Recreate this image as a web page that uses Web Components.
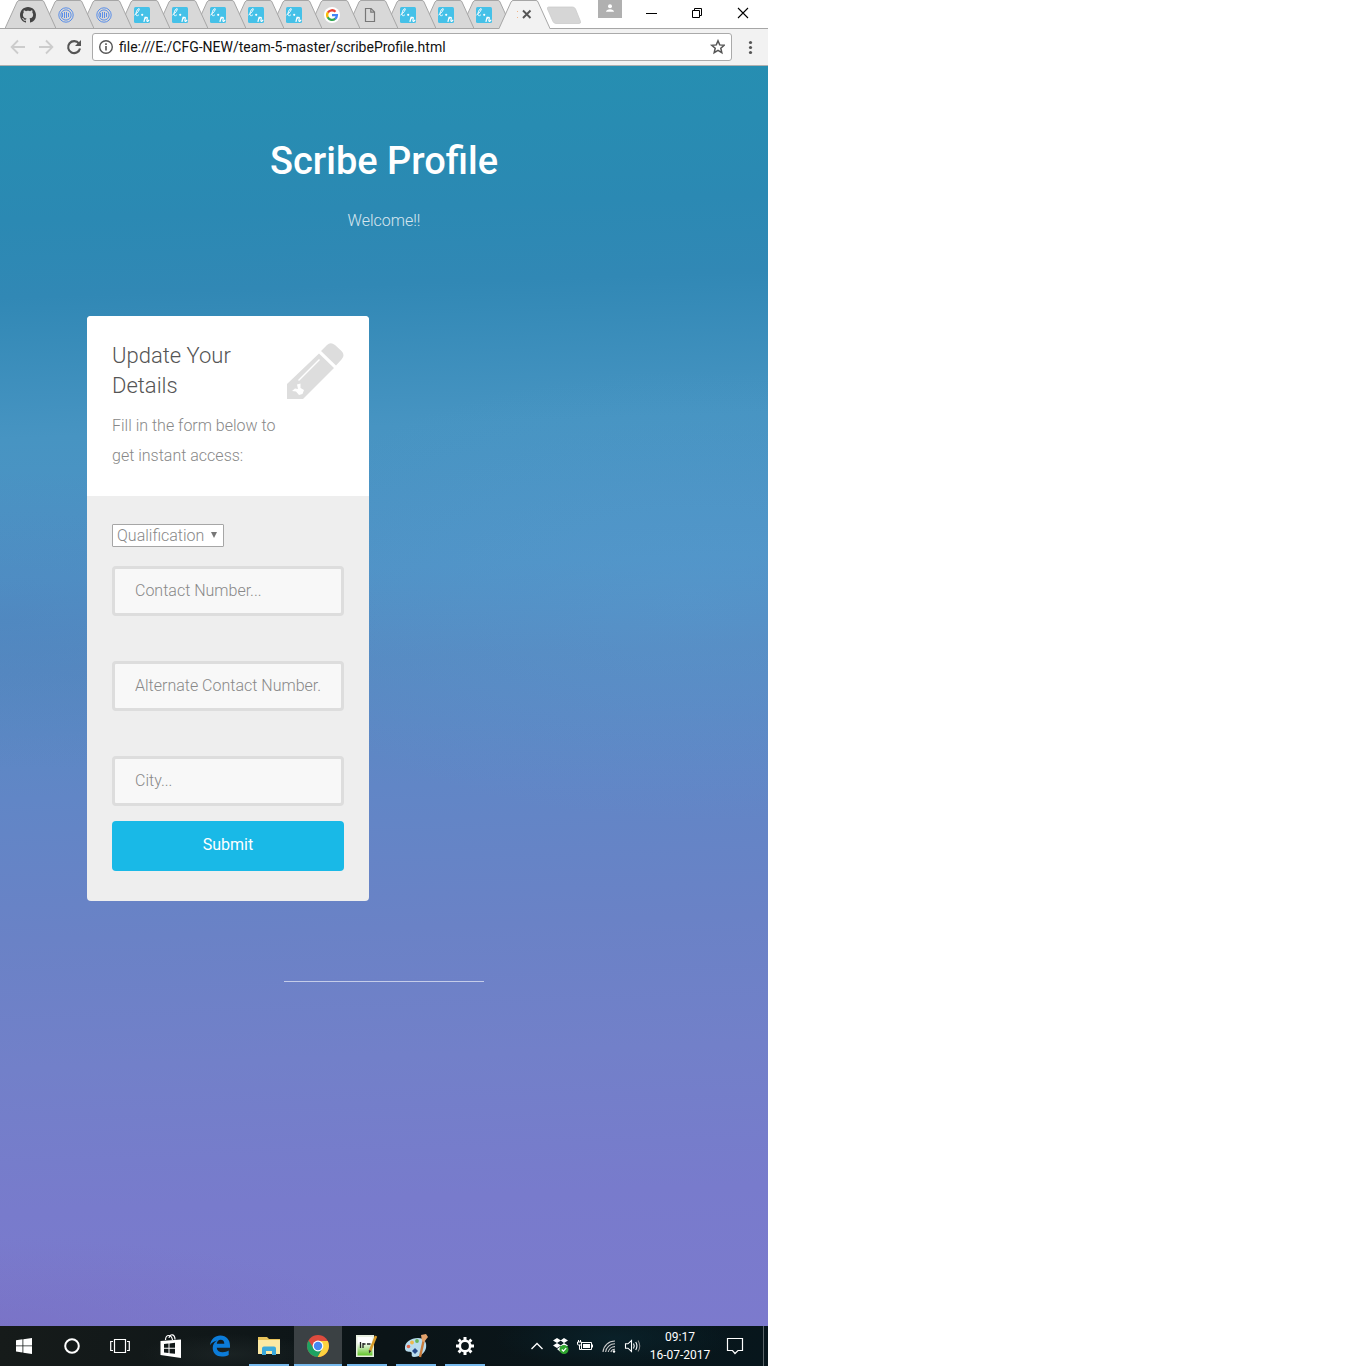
<!DOCTYPE html>
<html lang="en">
<head>
<meta charset="utf-8">
<meta name="viewport" content="width=device-width, initial-scale=1">
<title>Scribe Profile</title>
<style>
  body { margin: 0; background: #fff; font-family: Roboto, "Liberation Sans", sans-serif; }
</style>
</head>
<body>
<desktop-screen>
  <browser-tabs></browser-tabs>
  <browser-toolbar url="file:///E:/CFG-NEW/team-5-master/scribeProfile.html"></browser-toolbar>
  <scribe-page>
    <page-intro>
      <span slot="title">Scribe Profile</span>
      <span slot="text">Welcome!!</span>
    </page-intro>
    <details-card>
      <span slot="title">Update Your Details</span>
      <span slot="text">Fill in the form below to get instant access:</span>
      <profile-form></profile-form>
    </details-card>
  </scribe-page>
  <task-bar></task-bar>
</desktop-screen>

<script>
const ICONS = {
  github: '<svg width="16" height="16" viewBox="0 0 16 16"><path fill="#444" d="M8 0C3.58 0 0 3.58 0 8c0 3.54 2.29 6.53 5.47 7.59.4.07.55-.17.55-.38 0-.19-.01-.82-.01-1.49-2.01.37-2.53-.49-2.69-.94-.09-.23-.48-.94-.82-1.13-.28-.15-.68-.52-.01-.53.63-.01 1.08.58 1.23.82.72 1.21 1.87.87 2.33.66.07-.52.28-.87.51-1.07-1.78-.2-3.64-.89-3.64-3.95 0-.87.31-1.59.82-2.15-.08-.2-.36-1.02.08-2.12 0 0 .67-.21 2.2.82.64-.18 1.32-.27 2-.27s1.36.09 2 .27c1.53-1.04 2.2-.82 2.2-.82.44 1.1.16 1.92.08 2.12.51.56.82 1.27.82 2.15 0 3.07-1.87 3.75-3.65 3.95.29.25.54.73.54 1.48 0 1.07-.01 1.93-.01 2.2 0 .21.15.46.55.38A8 8 0 0 0 16 8c0-4.42-3.58-8-8-8z"/></svg>',
  rings: '<svg width="16" height="16" viewBox="0 0 16 16" fill="none" stroke="#5b8fe8"><circle cx="8" cy="8" r="7.2" stroke-width="1"/><circle cx="8" cy="8" r="5.100" stroke-width="1"/><path stroke-width="1" d="M8.500 5v6M6.500 5v6M10.500 6v4M4.500 6v4"/></svg>',
  script: '<svg width="16" height="16" viewBox="0 0 16 16"><rect width="16" height="16" rx="1.5" fill="#45c1e8"/><g fill="none" stroke="#fff" stroke-linecap="round" stroke-linejoin="round"><path stroke-width="1" d="M.8 7.800C3.500 6 5.600 3.200 5.200 1.700 4.500.9 2.200 3.700 2 6.600c-.1 2.600 1.300 2.700 2.700 1.300"/><path stroke-width="1.200" d="M10 14.500l1.100-4.300M10.500 12.500c1-1.800 2.500-2.800 2.800-1.700.1 1-.8 2.700-.3 3.300.5.5 1.300-.1 1.900-.9"/></g><circle cx="8.200" cy="7.800" r="1.100" fill="#fff"/></svg>',
  google: '<svg width="16" height="16" viewBox="0 0 16 16"><circle cx="8" cy="8" r="8" fill="#fff"/><g fill="none" stroke-width="2.300"><path stroke="#ea4335" d="M3.800 5.700A4.900 4.900 0 0 1 11.500 4.700"/><path stroke="#fbbc05" d="M3.900 10.600a4.900 4.900 0 0 1 0-5.200"/><path stroke="#34a853" d="M3.700 10.300a4.900 4.900 0 0 0 7.600 1.400"/><path stroke="#4285f4" d="M8 8.200h4.900a4.900 4.900 0 0 1-1.700 3.600"/></g></svg>',
  page: '<svg width="16" height="16" viewBox="0 0 16 16" fill="none" stroke="#777" stroke-width="1.200"><path d="M3.500 1.500h5.600l3.400 3.400v9.600h-9zM8.800 1.500v3.700h3.700"/></svg>',
  tabClose: '<svg width="16" height="16" viewBox="0 0 16 16"><path fill="#f0b489" d="M0 4h1v1H0zM0 10h1v1H0z"/><path stroke="#555" stroke-width="1.900" d="M6 3.500l7.500 7.500M13.500 3.500L6 11"/></svg>',
  person: '<svg width="24" height="18" viewBox="0 0 24 18"><g fill="#fff"><circle cx="12" cy="6.200" r="2"/><path d="M8 11.800c0-3.500 8-3.500 8 0z"/></g></svg>',
  minimise: '<svg width="12" height="12" viewBox="0 0 12 12"><path stroke="#000" d="M1 6.500h11"/></svg>',
  restore: '<svg width="12" height="12" viewBox="0 0 12 12" fill="none" stroke="#000"><path d="M1.500 3.500h7v7h-7zM3.500 3.500v-2h7v7h-2"/></svg>',
  close: '<svg width="12" height="12" viewBox="0 0 12 12"><path stroke="#000" stroke-width="1.100" d="M1 1l10 10M11 1L1 11"/></svg>',
  back: '<svg width="16" height="16" viewBox="0 0 16 16"><path fill="none" stroke="#ccc" stroke-width="1.800" d="M15 8H2.500M8 1.500L1.600 8 8 14.500"/></svg>',
  forward: '<svg width="16" height="16" viewBox="0 0 16 16"><path fill="none" stroke="#ccc" stroke-width="1.800" d="M1 8h12.500M8 1.500L14.400 8 8 14.500"/></svg>',
  reload: '<svg width="16" height="16" viewBox="0 0 16 16"><path fill="none" stroke="#555" stroke-width="2.100" d="M13 4.600A6 6 0 1 0 14 9.500"/><path fill="#555" d="M15 1v6H9z"/></svg>',
  info: '<svg width="16" height="16" viewBox="0 0 16 16"><circle cx="8" cy="8" r="6.300" fill="none" stroke="#555" stroke-width="1.400"/><path fill="#555" d="M7.200 7h1.600v4.500H7.200zM7.200 4.300h1.600v1.600H7.200z"/></svg>',
  star: '<svg width="16" height="16" viewBox="0 0 16 16"><path fill="none" stroke="#555" stroke-width="1.500" d="M9 1.800l1.700 4.100 4.500.4-3.400 2.900 1 4.400L9 11.300l-3.800 2.300 1-4.400-3.400-2.900 4.500-.4z"/></svg>',
  menu: '<svg width="16" height="16" viewBox="0 0 16 16" fill="#555"><circle cx="8.500" cy="3.500" r="1.600"/><circle cx="8.500" cy="8.500" r="1.600"/><circle cx="8.500" cy="13.500" r="1.600"/></svg>',
  pencil: '<svg width="58" height="58" viewBox="0 0 58 58"><path fill="#ddd" d="M1 57V42L33 11.500 48 26 17 57zM35 9l6-6q3.500-3.500 8 0l6.500 6q4 4 0 8.500L50 23.500z"/><path fill="none" stroke="#fff" stroke-width="1.400" d="M12.500 38.500L33.500 17.500"/><path fill="#fff" d="M6 49l3-2.500 3 .5-1-4.500 3.500-1V46l3.500 2-1.500 4-3.500 1-3-3.500z"/></svg>',
  arrow: '<svg width="8" height="8" viewBox="0 0 8 8"><path fill="#777" d="M1 1h6L4 7z"/></svg>',
  windows: '<svg width="16" height="16" viewBox="0 0 16 16" fill="#fff"><path d="M0 2.200l6.500-.9v6.200H0zM7.300 1.200L16 0v7.500H7.300zM0 8.300h6.500v6.200L0 13.600zM7.300 8.300H16V16l-8.700-1.300z"/></svg>',
  cortana: '<svg width="18" height="18" viewBox="0 0 18 18"><circle cx="9" cy="9" r="6.800" fill="none" stroke="#fff" stroke-width="2"/></svg>',
  taskview: '<svg width="20" height="16" viewBox="0 0 20 16" fill="none" stroke="#fff" stroke-width="1.200"><path d="M4.500 1.500h11v13h-11zM3 3.500H.7v9H3M17 3.500h2.300v9H17"/></svg>',
  store: '<svg width="24" height="26" viewBox="0 0 24 26"><path fill="none" stroke="#fff" stroke-width="1.200" d="M6.500 7c0-6 6-6 7 0M10 5c1-5 6-4 6 1.500"/><path fill="#fff" d="M1.500 8L22 6.500V25L1.500 22z"/><path fill="#101718" d="M5 11l4.500-.5v4.300H5zM10.500 10.400l5.500-.6v5h-5.500zM5 15.800h4.500v4.300L5 19.500zM10.500 15.800H16v5l-5.500-.6z"/></svg>',
  edge: '<svg width="22" height="22" viewBox="0 0 22 22"><path fill="#0c7cd9" d="M1 10.200C2 4 6 .5 11.300.5 17.500.5 21 5 21 10.500v2.200H7.700c.3 3 2.700 4.500 6 4.500 2.300 0 4.300-.6 6-1.700v4.500c-2 1-4.400 1.500-7 1.500-5.200 0-9-3.500-9-8.500 0-3.300 1.700-6 4.500-7.400C4.800 6.200 2.600 7.800 1 10.200zM7.800 8.800h7.500c0-2.600-1.300-4-3.600-4-2.200 0-3.600 1.600-3.900 4z"/></svg>',
  folder: '<svg width="22" height="20" viewBox="0 0 22 20"><path fill="#e9c35b" d="M0 1h9l2 2h11v5H0z"/><path fill="#fce9a4" d="M0 4h22v14H0z"/><path fill="#3ba9dc" d="M4 19v-6.500Q4 10.500 6 10.500h10q2 0 2 2V19h-4v-4H8v4z"/></svg>',
  chrome: '<svg width="24" height="24" viewBox="0 0 24 24"><circle cx="12" cy="12" r="11" fill="#dd4b3e"/><path fill="#fdd23f" d="M12 7h9.800A11 11 0 0 1 11.500 23l4.800-8.500z"/><path fill="#1ea362" d="M2.500 6.500A11 11 0 0 0 11.500 23l4.800-8.500L12 17 7.700 14.500z"/><circle cx="12" cy="12" r="5.400" fill="#fff"/><circle cx="12" cy="12" r="4.200" fill="#4688f1"/></svg>',
  notepad: '<svg width="24" height="24" viewBox="0 0 24 24"><defs><linearGradient id="np" x2="0" y2="1"><stop offset=".3" stop-color="#fff"/><stop offset="1" stop-color="#62c52a"/></linearGradient></defs><path fill="#e7efe0" d="M1 1h18v22H1z"/><path fill="url(#np)" d="M2.500 3h15v18.500h-15z"/><path fill="none" stroke="#222" stroke-width="1.300" d="M5.500 14V8M8 14V9M8 10h2.500M12 10h3.500"/><path stroke="#d79a28" stroke-width="2.600" d="M21 2l-6 15"/><path fill="#333" d="M13.800 16l2.500 1-2.300 2.500z"/></svg>',
  palette: '<svg width="24" height="24" viewBox="0 0 24 24"><path fill="#b8dcee" d="M1 15C0 8 7 4 14 4s9 5 8 10-6 9-12 9c-4 0-1-4-3-5s-5 1-6-3z"/><circle cx="4.500" cy="12.500" r="1.800" fill="#e0664b"/><circle cx="8" cy="8.500" r="1.900" fill="#efb94e"/><circle cx="13" cy="7" r="1.900" fill="#67b55a"/><path fill="#284d8c" d="M8 17l3-3 3 3-3 3z"/><path stroke="#c87b3c" stroke-width="2.400" d="M20 5l-4 18"/><path fill="#e4a36d" d="M17 1l5-1 2 3-4 5-2-1z"/></svg>',
  gear: '<svg width="20" height="20" viewBox="0 0 20 20" fill="none" stroke="#fff"><circle cx="10" cy="10" r="5.200" stroke-width="2.600"/><path stroke-width="3" d="M10 1v3M10 16v3M1 10h3M16 10h3M3.600 3.600l2.100 2.100M14.300 14.300l2.100 2.100M3.600 16.400l2.100-2.100M14.300 5.700l2.100-2.100"/></svg>',
  chevron: '<svg width="14" height="10" viewBox="0 0 14 10"><path fill="none" stroke="#fff" stroke-width="1.300" d="M1.500 8L7 2.500 12.500 8"/></svg>',
  dropbox: '<svg width="18" height="18" viewBox="0 0 18 18"><path fill="#fff" d="M5 1l4 2.500L5 6 1 3.500zM12 1l4 2.500L12 6 8.500 3.500zM5 6l4 2.500L5 11 1 8.500zM12 6l4 2.500L12 11 8.500 8.500zM8.500 9.500L12 12l-3.500 3L5 12z"/><circle cx="12" cy="12.500" r="4.500" fill="#2fa52f"/><path fill="none" stroke="#fff" stroke-width="1.300" d="M9.800 12.500l1.600 1.600 2.800-3"/></svg>',
  battery: '<svg width="18" height="14" viewBox="0 0 18 14"><path fill="none" stroke="#fff" d="M5.500 3.500h10v7h-10zM3.500 6v4.500h2M1.500 3v2q0 1 1 1h2q1 0 1-1V3zM2.500 1v2M4.500 1v2"/><path fill="#fff" d="M7 5h7v4H7zM16 5.500h1v3h-1z"/></svg>',
  wifi: '<svg width="16" height="16" viewBox="0 0 16 16" fill="none" stroke="#ccc" stroke-width="1.100"><path d="M2 14A12 12 0 0 1 14 3M4.600 14A9.400 9.400 0 0 1 14 5.800M7.200 14A6.800 6.800 0 0 1 14 8.600M9.800 14A4.200 4.200 0 0 1 14 11.200"/><circle cx="13" cy="13.500" r="1.200" fill="#fff" stroke="none"/></svg>',
  sound: '<svg width="18" height="14" viewBox="0 0 18 14" fill="none" stroke="#fff" stroke-width="1.100"><path d="M1.500 4.800H4L7.500 1.500v11L4 9.200H1.500zM9.500 4.500q1.500 2.500 0 5M11.700 3q2.500 4 0 8"/><path stroke="#888" d="M14 1.500q3.500 5.500 0 11"/></svg>',
  action: '<svg width="18" height="18" viewBox="0 0 18 18"><path fill="none" stroke="#fff" stroke-width="1.200" d="M1.500 1.500h15v12h-4.500L9 16.500l-2.500-3h-5z"/></svg>'
};

class BaseElement extends HTMLElement {
  constructor() {
    super();
    this.attachShadow({ mode: 'open' });
  }
  connectedCallback() {
    this.shadowRoot.innerHTML = '<style>*{box-sizing:border-box}' + this.css() + '</style>' + this.html();
  }
}

customElements.define('ui-icon', class extends BaseElement {
  css() { return ':host{display:inline-flex;flex:none}svg{display:block}'; }
  html() { return ICONS[this.getAttribute('name')] || ''; }
});

customElements.define('desktop-screen', class extends BaseElement {
  css() { return ':host{display:flex;flex-direction:column;width:100%;max-width:768px;min-height:100vh}::slotted(scribe-page){flex:1}'; }
  html() { return '<slot></slot>'; }
});

/* One trapezoid tab; its icon sits in the middle. */
customElements.define('browser-tab', class extends BaseElement {
  css() { return `
    :host{display:block;flex:none;width:51px;height:29px;--fill:#d8d8d8}
    :host([active]){--fill:#f2f2f2}
    button{display:grid;width:100%;height:100%;padding:0;border:0;background:none}
    button>*{grid-area:1/1}
    ui-icon{place-self:center;padding:0 6px 0 0}
    :host([active]) ui-icon{padding-right:0}`; }
  html() {
    const active = this.hasAttribute('active');
    return `<button type="button" aria-label="Tab"><svg width="51" height="29" viewBox="0 0 51 29">
      <path fill="var(--fill)" d="M0 29L12 2q1-1.500 2-1.500h23q1.500 0 2 1.500l12 27z"/>
      <path fill="none" stroke="#a6a6a6" d="M0 28.500L12 2q1-1.500 2-1.500h23q1.500 0 2 1.500l12 26.500${active ? '' : 'H0'}"/></svg>
      <ui-icon name="${this.getAttribute('icon')}"></ui-icon></button>`;
  }
});

customElements.define('browser-tabs', class extends BaseElement {
  css() { return `
    :host{display:flex;align-items:flex-start;height:29px;padding:0 2px 0 5px;background:linear-gradient(#a6a6a6,#a6a6a6) 0 100%/100% 1px no-repeat #fff}
    nav{display:flex}
    browser-tab+browser-tab{margin-left:-13px}
    button{display:grid;place-items:center;flex:none;border:0;padding:0;background:none}
    .new{margin-top:6px;margin-left:-4px}
    .user{width:24px;height:18px;background:#b0b0b0;margin:0 6px 0 auto}
    .win{width:46px;height:26px}`; }
  html() {
    const icons = ['github', 'rings', 'rings', 'script', 'script', 'script', 'script', 'script', 'google', 'page', 'script', 'script', 'script'];
    return `<nav>${icons.map((n, i) => `<browser-tab icon="${n}" style="z-index:${20 - i}"></browser-tab>`).join('')}<browser-tab active icon="tabClose" style="z-index:30"></browser-tab></nav>
      <button class="new" aria-label="New tab"><svg width="36" height="19" viewBox="0 0 36 19"><path fill="#d6d6d6" stroke="#ccc" stroke-width=".8" d="M2.500 1h24q2 0 3 2l5 12.500q.5 2-1.500 2H10q-2 0-3-2L1.500 3q-.5-2 1-2z"/></svg></button>
      <button class="user" aria-label="Profile"><ui-icon name="person"></ui-icon></button>
      <button class="win" aria-label="Minimise"><ui-icon name="minimise"></ui-icon></button>
      <button class="win" aria-label="Restore"><ui-icon name="restore"></ui-icon></button>
      <button class="win" aria-label="Close"><ui-icon name="close"></ui-icon></button>`;
  }
});

customElements.define('browser-toolbar', class extends BaseElement {
  css() { return `
    :host{display:flex;align-items:center;height:37px;padding:0 4px;background:#f2f2f2;border-bottom:1px solid #b0b0b0;box-sizing:border-box}
    button{display:grid;place-items:center;flex:none;width:28px;height:28px;border:0;padding:0;background:none}
    label{flex:1;min-width:0;display:flex;align-items:center;gap:5px;height:28px;margin:0 4px;padding-left:5px;background:#fff;border:1px solid #aaa;border-radius:3px}
    input{flex:1;min-width:0;border:0;padding:0;outline:0;background:none;color:#111;font:14px/20px Roboto,sans-serif}`; }
  html() { return `
    <button aria-label="Back"><ui-icon name="back"></ui-icon></button>
    <button aria-label="Forward"><ui-icon name="forward"></ui-icon></button>
    <button aria-label="Reload"><ui-icon name="reload"></ui-icon></button>
    <label><ui-icon name="info"></ui-icon><input type="text" aria-label="Address" value="${this.getAttribute('url')}">
      <button aria-label="Bookmark"><ui-icon name="star"></ui-icon></button></label>
    <button aria-label="Menu"><ui-icon name="menu"></ui-icon></button>`; }
});

customElements.define('scribe-page', class extends BaseElement {
  css() { return `
    :host{display:flex;flex-direction:column;padding:65px 87px 0;box-sizing:border-box;
      background:
        radial-gradient(60% 18% at 90% 42%,rgba(90,165,215,.25),transparent),
        radial-gradient(50% 12% at 0 44%,rgba(75,125,185,.35),transparent),
        radial-gradient(50% 7% at 0 100%,rgba(120,105,190,.4),transparent),
        linear-gradient(178deg,#258fb1 0,#2b89b3 12%,#3188b5 18%,#4794c2 29%,#5092c6 40%,#578ac2 47%,#6186c6 57%,#6a82c6 68%,#7280c9 78%,#787bcc 89%,#7c7acd 100%)}
    .divider{width:200px;border:0;border-top:1px solid rgba(255,255,255,.6);margin:80px auto 0}`; }
  html() { return '<slot></slot><hr class="divider">'; }
});

customElements.define('page-intro', class extends BaseElement {
  css() { return `
    :host{display:block;text-align:center;color:#fff}
    h1{margin:0;font-size:38px;line-height:60px;font-weight:500}
    p{margin:15px 0 0;font-size:16px;line-height:30px;font-weight:300;opacity:.8}`; }
  html() { return '<h1><slot name="title"></slot></h1><p><slot name="text"></slot></p>'; }
});

customElements.define('details-card', class extends BaseElement {
  css() { return `
    :host{display:block;width:100%;max-width:282px;margin-top:80px;border-radius:4px;overflow:hidden;background:#eee;color:#888;font-weight:300;font-size:16px;line-height:30px}
    header{display:flex;justify-content:space-between;align-items:flex-start;padding:25px;background:#fff}
    h3{margin:0;color:#555;font-size:22px;line-height:30px;font-weight:300}
    p{margin:10px 0 0}
    ui-icon{padding-top:1px}`; }
  html() { return `<header><div><h3><slot name="title"></slot></h3><p><slot name="text"></slot></p></div><ui-icon name="pencil"></ui-icon></header><slot></slot>`; }
});

customElements.define('profile-form', class extends BaseElement {
  css() { return `
    :host{display:block;padding:25px 25px 30px}
    form{display:flex;flex-direction:column;gap:15px}
    .pick{display:grid;width:112px;height:30px;align-items:center;padding-bottom:2px}
    .pick>*{grid-area:1/1}
    .pick ui-icon{justify-self:end;padding-right:6px;pointer-events:none}
    select{appearance:none;width:100%;height:23px;margin:0;padding:0 0 0 4px;border:1px solid #a6a6a6;border-radius:1px;background:#fff;color:#888;font:300 16px/21px Roboto,sans-serif}
    .field{width:100%;height:50px;margin:0;padding:0 20px 2px;border:3px solid #ddd;border-radius:4px;background:#f8f8f8;color:#888;font:300 16px/30px Roboto,sans-serif}
    .field::placeholder{color:#888;opacity:1}
    .fields{display:flex;flex-direction:column;gap:45px}
    .submit{height:50px;margin:0;padding:0 20px 2px;border:0;border-radius:4px;background:#19b9e7;color:#fff;font:400 16px/30px Roboto,sans-serif}`; }
  html() { return `<form>
    <div class="pick"><select aria-label="Qualification"><option>Qualification</option></select><ui-icon name="arrow"></ui-icon></div>
    <div class="fields">
      <input class="field" type="text" aria-label="Contact Number" placeholder="Contact Number...">
      <input class="field" type="text" aria-label="Alternate Contact Number" placeholder="Alternate Contact Number...">
      <input class="field" type="text" aria-label="City" placeholder="City...">
    </div>
    <button class="submit" type="button">Submit</button></form>`; }
});

customElements.define('task-bar', class extends BaseElement {
  css() { return `
    :host{display:flex;height:40px;color:#fff;background:
      radial-gradient(90px 20px at 30% 70%,rgba(50,60,60,.3),transparent),
      radial-gradient(120px 30px at 80% 30%,rgba(10,40,50,.6),transparent),
      linear-gradient(90deg,#161b1a,#0b1417 50%,#07161c)}
    button{display:grid;place-items:center;flex:none;width:48px;height:40px;padding:0;border:0;background:none;color:inherit}
    .apps{display:flex;gap:1px;margin-left:3px}
    .open{background:linear-gradient(#76b9ed,#76b9ed) 50% 100%/40px 2px no-repeat}
    .focus{background:linear-gradient(#76b9ed,#76b9ed) 50% 100%/48px 2px no-repeat #3b4144}
    .tray{display:flex;margin-left:auto}
    .tray .small{width:24px}
    .clock{width:70px;display:flex;flex-direction:column;justify-content:center;align-items:center;font:12px/18px Roboto,sans-serif}
    .note{width:40px}
    .peek{width:5px;margin-left:8px;border-left:1px solid #596468}`; }
  html() {
    const b = (n, c = '') => `<button class="${c}" aria-label="${n}"><ui-icon name="${n}"></ui-icon></button>`;
    return b('windows') + b('cortana') + b('taskview') +
      `<div class="apps">${b('store')}${b('edge')}${b('folder', 'open')}${b('chrome', 'focus')}${b('notepad', 'open')}${b('palette', 'open')}${b('gear', 'open')}</div>
      <div class="tray">${['chevron', 'dropbox', 'battery', 'wifi', 'sound'].map(n => b(n, 'small')).join('')}
      <button class="clock"><span>09:17</span><span>16-07-2017</span></button>${b('action', 'note')}<button class="peek" aria-label="Show desktop"></button></div>`;
  }
});
</script>
</body>
</html>
